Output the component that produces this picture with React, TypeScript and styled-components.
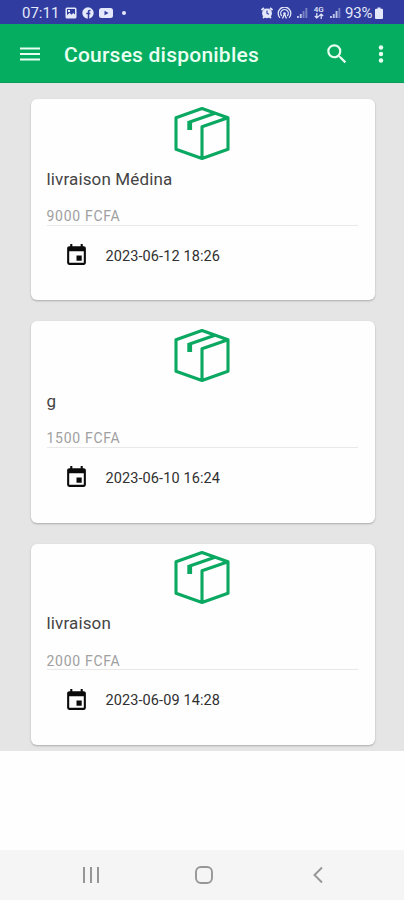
import React from 'react';
import styled, { createGlobalStyle } from 'styled-components';

const GlobalStyle = createGlobalStyle`
  * { box-sizing: border-box; }
  body { margin: 0; background: #fefefe; font-family: Roboto, "Noto Sans", sans-serif; }
  svg { display: block; flex: none; }
`;

const Screen = styled.div`
  width: 404px;
  height: 900px;
  display: flex;
  flex-direction: column;
  overflow: hidden;
  background: #fefefe;
`;

const StatusBar = styled.div`
  height: 24px;
  flex: none;
  display: flex;
  align-items: center;
  justify-content: space-between;
  padding: 1px 21px 0 22px;
  background: #303c9f;
  color: #e4e8fa;
`;

const StatusGroup = styled.div<{ $gap: number }>`
  display: flex;
  align-items: center;
  gap: ${({ $gap }) => $gap}px;
`;

const StatusText = styled.span<{ $width: number; $spacing?: number }>`
  width: ${({ $width }) => $width}px;
  font-size: 15px;
  line-height: 22px;
  letter-spacing: ${({ $spacing = 0 }) => $spacing}px;
  white-space: nowrap;
`;

const Header = styled.header`
  height: 59px;
  flex: none;
  display: flex;
  align-items: center;
  padding: 0 11px 0 18px;
  background: #04ad60;
  border-bottom: 1px solid #079c57;
  color: #e9fff1;
`;

const Title = styled.h1`
  flex: 1;
  margin: 3px 0 0 22px;
  font-size: 21px;
  font-weight: 500;
  line-height: 28px;
  letter-spacing: 0.22px;
`;

const IconButton = styled.button<{ $width: number }>`
  width: ${({ $width }) => $width}px;
  height: 28px;
  display: flex;
  align-items: center;
  justify-content: center;
  padding: 1px 0 0;
  border: 0;
  background: none;
  color: inherit;
`;

const Actions = styled.div`
  display: flex;
  gap: 10px;
`;

const CourseList = styled.main`
  height: 667.5px;
  flex: none;
  display: flex;
  flex-direction: column;
  gap: 21px;
  padding: 16px 29.5px 0 30.5px;
  background: #e5e5e5;
`;

const Card = styled.article`
  height: 201.400px;
  flex: none;
  padding: 5.500px 17px 0 16px;
  border-radius: 6px;
  background: #fefefe;
  box-shadow: 0 1px 2px rgba(0, 0, 0, 0.26);
`;

const Parcel = styled.div`
  display: flex;
  justify-content: center;
  height: 56px;
`;

const CourseName = styled.h2`
  margin: 6px 0 0;
  height: 24px;
  font-size: 17px;
  font-weight: 400;
  line-height: 24px;
  letter-spacing: 0.14px;
  color: #444;
`;

const Price = styled.div`
  height: 35px;
  padding-top: 15.500px;
  border-bottom: 1px solid #e8e8e8;
  font-size: 14px;
  line-height: 20px;
  letter-spacing: 0.7px;
  color: #a0a0a0;
`;

const DateRow = styled.div`
  display: flex;
  align-items: center;
  gap: 17px;
  height: 60px;
  padding-left: 17px;
  color: #0b0b0b;
`;

const DateText = styled.time`
  padding-top: 2px;
  font-size: 14.5px;
  line-height: 20px;
  letter-spacing: 0.1px;
  color: #303030;
`;

const Blank = styled.div`
  flex: 1;
`;

const NavBar = styled.nav`
  height: 50px;
  flex: none;
  display: grid;
  grid-template-columns: repeat(3, 113.5px);
  justify-content: center;
  align-items: center;
  justify-items: center;
  padding-left: 4px;
  background: #f5f5f5;
  color: #969696;
`;

const PhotoIcon = () => (
  <svg width="12" height="12" viewBox="0 0 12 12">
    <path fill="currentColor" fillRule="evenodd" d="M2 .5h8A1.500 1.500 0 0 1 11.500 2v8a1.500 1.500 0 0 1-1.500 1.500H2A1.500 1.500 0 0 1 .5 10V2A1.500 1.500 0 0 1 2 .5ZM2 2v6.200l2.500-2.500 2 2 1.700-1.700L10 7.500V2ZM3 3h2v2H3Z" />
  </svg>
);

const FacebookIcon = () => (
  <svg width="12" height="12" viewBox="0 0 12 12">
    <circle cx="6" cy="6" r="5.700" fill="currentColor" />
    <path d="M6.500 12V4.800Q6.500 3.300 8.500 3.500M4.300 6.600h4" fill="none" stroke="#303c9f" strokeWidth="1.500" />
  </svg>
);

const VideoIcon = () => (
  <svg width="14" height="12" viewBox="0 0 14 12">
    <rect y="1" width="14" height="10" rx="2.500" fill="currentColor" />
    <path d="m5.500 3.700 4 2.300-4 2.300Z" fill="#303c9f" />
  </svg>
);

const AlarmIcon = () => (
  <svg width="12" height="12" viewBox="0 0 12 12">
    <path d="m.5 3 2.500-2M11.500 3 9 1M2 11l1.500-1.500M10 11 8.500 9.500" stroke="currentColor" strokeWidth="1.800" />
    <circle cx="6" cy="6.300" r="4.900" fill="currentColor" />
    <path d="M6 3.500v3l2 .8" fill="none" stroke="#303c9f" strokeWidth="1.100" />
  </svg>
);

const HotspotIcon = () => (
  <svg width="15" height="12" viewBox="0 0 15 12" fill="none" stroke="currentColor" strokeWidth="1.300">
    <path d="M3 10.800a6.300 6.300 0 1 1 9 0M4.800 9a3.800 3.800 0 1 1 5.400 0" />
    <circle cx="7.500" cy="6.500" r="1.300" fill="currentColor" stroke="none" />
    <path d="m7.500 7-2 4.500M7.500 7l2 4.500" />
  </svg>
);

const SignalIcon = ({ level }: { level: number }) => (
  <svg width="12" height="12" viewBox="0 0 12 12" fill="currentColor">
    {[2, 4, 7, 10].map((h, i) => (
      <rect key={h} x={1 + i * 2.8} y={11 - h} width="1.900" height={h} opacity={i < level ? 0.8 : 0.4} />
    ))}
  </svg>
);

const NetworkStatus = styled.span`
  width: 12px;
  display: flex;
  flex-direction: column;
  align-items: center;
  font-size: 8px;
  font-weight: 500;
  line-height: 7px;
`;

const TrafficArrows = () => (
  <svg width="10" height="6" viewBox="0 0 10 6" fill="none" stroke="currentColor" strokeWidth="1.200">
    <path d="M2.800 0v5M.8 3l2 2 2-2M7.200 6V1M5.200 3l2-2 2 2" />
  </svg>
);

const BatteryIcon = () => (
  <svg width="8" height="12" viewBox="0 0 8 12" fill="currentColor">
    <path d="M2.500.5h3v1.200H7a1 1 0 0 1 1 1V11a1 1 0 0 1-1 1H1a1 1 0 0 1-1-1V2.700a1 1 0 0 1 1-1h1.500Z" />
  </svg>
);

const MenuIcon = () => (
  <svg width="20" height="14" viewBox="0 0 20 14" stroke="currentColor" strokeWidth="2">
    <path d="M0 1.500h20M0 7h20M0 12.500h20" />
  </svg>
);

const SearchIcon = () => (
  <svg width="26" height="26" viewBox="0 0 24 24" fill="currentColor">
    <path d="M15.500 14h-.79l-.28-.27A6.471 6.471 0 0 0 16 9.500 6.500 6.500 0 1 0 9.500 16c1.610 0 3.090-.59 4.230-1.570l.27.28v.79l5 4.990L20.490 19l-4.990-5Zm-6 0a4.500 4.500 0 1 1 0-9 4.500 4.500 0 0 1 0 9Z" />
  </svg>
);

const MoreIcon = () => (
  <svg width="6" height="20" viewBox="0 0 6 20" fill="currentColor">
    <circle cx="3" cy="3.500" r="2.200" />
    <circle cx="3" cy="10" r="2.200" />
    <circle cx="3" cy="16.500" r="2.200" />
  </svg>
);

const BoxIcon = () => (
  <svg width="56" height="56" viewBox="0 0 56 56" fill="none" stroke="#0ba862" strokeWidth="3.100">
    <path d="M28 3.500 54 12.700v31.500L28 53.500 2 44.200V12.700ZM54 12.700 28 21.700v31.800" strokeLinejoin="round" />
    <path d="M41 8.200 15 17.300" />
    <path d="M15.700 16v9" strokeWidth="4.800" />
  </svg>
);

const CalendarIcon = () => (
  <svg width="25" height="25" viewBox="0 0 24 24" fill="currentColor">
    <path d="M17 12h-5v5h5v-5ZM16 1v2H8V1H6v2H5c-1.110 0-1.990.9-1.990 2L3 19a2 2 0 0 0 2 2h14c1.100 0 2-.9 2-2V5c0-1.100-.9-2-2-2h-1V1h-2Zm3 18H5V8h14v11Z" />
  </svg>
);

const RecentsIcon = () => (
  <svg width="18" height="18" viewBox="0 0 18 18" stroke="currentColor" strokeWidth="2">
    <path d="M2 1v16M9 1v16M16 1v16" />
  </svg>
);

const HomeIcon = () => (
  <svg width="18" height="18" viewBox="0 0 18 18" fill="none" stroke="currentColor" strokeWidth="1.900">
    <rect x="1" y="1" width="16" height="16" rx="5" />
  </svg>
);

const BackIcon = () => (
  <svg width="10" height="18" viewBox="0 0 10 18" fill="none" stroke="currentColor" strokeWidth="1.900">
    <path d="M9 1.500 1.500 9 9 16.500" />
  </svg>
);

const courses = [
  { name: 'livraison Médina', price: '9000 FCFA', date: '2023-06-12 18:26' },
  { name: 'g', price: '1500 FCFA', date: '2023-06-10 16:24' },
  { name: 'livraison', price: '2000 FCFA', date: '2023-06-09 14:28' },
];

export default function App() {
  return (
    <Screen>
      <GlobalStyle />
      <StatusBar>
        <StatusGroup $gap={5}>
          <StatusText $width={38}>07:11</StatusText>
          <PhotoIcon />
          <FacebookIcon />
          <VideoIcon />
          <svg width="12" height="6" viewBox="0 0 12 6">
            <circle cx="6" cy="3" r="2" fill="currentColor" />
          </svg>
        </StatusGroup>
        <StatusGroup $gap={4.2}>
          <AlarmIcon />
          <HotspotIcon />
          <SignalIcon level={2} />
          <NetworkStatus>
            4G
            <TrafficArrows />
          </NetworkStatus>
          <SignalIcon level={3} />
          <StatusGroup $gap={1}>
            <StatusText $width={29} $spacing={-0.2}>93%</StatusText>
            <BatteryIcon />
          </StatusGroup>
        </StatusGroup>
      </StatusBar>
      <Header>
        <IconButton $width={24} aria-label="Menu"><MenuIcon /></IconButton>
        <Title>Courses disponibles</Title>
        <Actions>
          <IconButton $width={45} aria-label="Rechercher"><SearchIcon /></IconButton>
          <IconButton $width={24} aria-label="Options"><MoreIcon /></IconButton>
        </Actions>
      </Header>
      <CourseList>
        {courses.map((course) => (
          <Card key={course.date}>
            <Parcel><BoxIcon /></Parcel>
            <CourseName>{course.name}</CourseName>
            <Price>{course.price}</Price>
            <DateRow>
              <CalendarIcon />
              <DateText>{course.date}</DateText>
            </DateRow>
          </Card>
        ))}
      </CourseList>
      <Blank />
      <NavBar>
        <RecentsIcon />
        <HomeIcon />
        <BackIcon />
      </NavBar>
    </Screen>
  );
}
